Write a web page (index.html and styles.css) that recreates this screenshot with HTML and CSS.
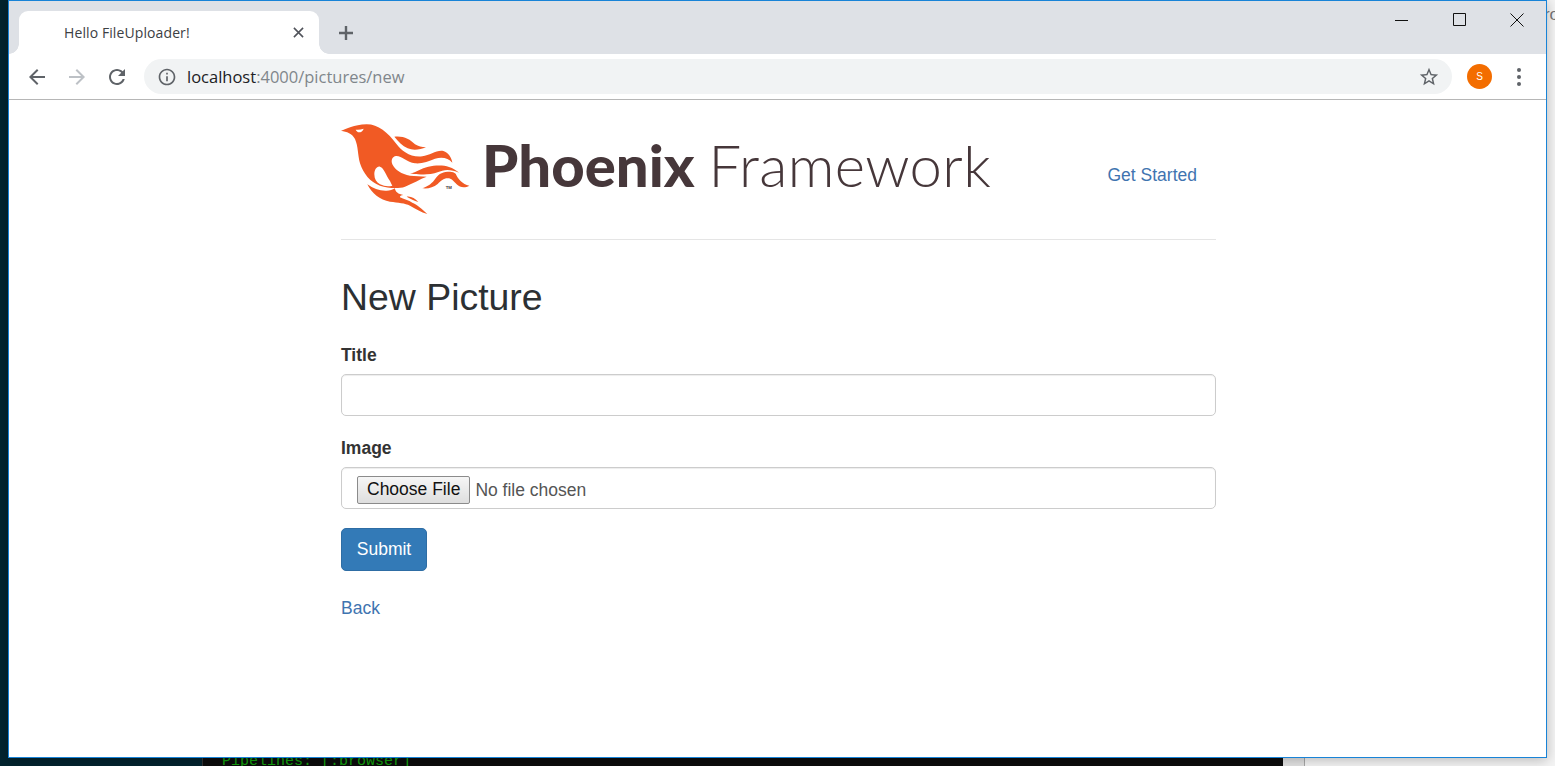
FILE: index.html
```html
<!DOCTYPE html>
<html lang="en">

<head>
    <meta charset="UTF-8">
    <meta name="viewport" content="width=device-width, initial-scale=1.0">
    <title>Hello FileUploader!</title>
    <link rel="stylesheet" href="styles.css">
</head>

<body>
    <!-- what shows behind the browser window -->
    <div class="desk-terminal"><span class="terminal-line">Pipelines: [:browser]</span></div>
    <div class="desk-side"><span class="desk-side-text">ro</span></div>

    <div class="window">
        <div class="titlebar">
            <div class="tab">
                <span class="tab-title">Hello FileUploader!</span>
                <svg class="tab-close" viewBox="0 0 12 12"><path d="M1 1l10 10M11 1L1 11"/></svg>
            </div>
            <svg class="new-tab" viewBox="0 0 16 16"><path d="M8 1v14M1 8h14"/></svg>
            <div class="win-controls">
                <svg class="win-btn" viewBox="0 0 14 14"><path d="M0 7.5h13"/></svg>
                <svg class="win-btn win-max" viewBox="0 0 14 14"><path d="M.5 .5h12v12H.5z"/></svg>
                <svg class="win-btn" viewBox="0 0 14 14"><path d="M.5 .5l13 13M13.5 .5l-13 13"/></svg>
            </div>
        </div>

        <div class="toolbar">
            <svg class="tool-icon" viewBox="0 0 24 24"><path d="M20 11H7.83l5.59-5.59L12 4l-8 8 8 8 1.41-1.41L7.83 13H20v-2z"/></svg>
            <svg class="tool-icon tool-off" viewBox="0 0 24 24"><path d="M4 11h12.17l-5.59-5.59L12 4l8 8-8 8-1.41-1.41L16.17 13H4v-2z"/></svg>
            <svg class="tool-icon" viewBox="0 0 24 24"><path d="M17.65 6.35C16.2 4.9 14.21 4 12 4c-4.42 0-7.99 3.58-7.99 8s3.57 8 7.99 8c3.73 0 6.84-2.55 7.73-6h-2.08c-.82 2.33-3.04 4-5.65 4-3.31 0-6-2.69-6-6s2.69-6 6-6c1.66 0 3.14.69 4.22 1.78L13 11h7V4l-2.35 2.35z"/></svg>
            <div class="omnibox">
                <svg class="info-icon" viewBox="0 0 24 24"><path d="M11 7h2v2h-2zm0 4h2v6h-2zm1-9C6.48 2 2 6.48 2 12s4.48 10 10 10 10-4.48 10-10S17.52 2 12 2zm0 18c-4.41 0-8-3.59-8-8s3.59-8 8-8 8 3.59 8 8-3.59 8-8 8z"/></svg>
                <span class="url"><span class="url-host">localhost</span>:4000/pictures/new</span>
                <svg class="star-icon" viewBox="0 0 24 24"><path d="M22 9.24l-7.19-.62L12 2 9.19 8.63 2 9.24l5.46 4.73L5.82 21 12 17.27 18.18 21l-1.63-7.03L22 9.24zM12 15.4l-3.76 2.27 1-4.28-3.32-2.88 4.38-.38L12 6.1l1.71 4.04 4.38.38-3.32 2.88 1 4.28L12 15.4z"/></svg>
            </div>
            <div class="avatar">S</div>
            <div class="menu-dots"><i></i><i></i><i></i></div>
        </div>

        <div class="page">
            <div class="container">
                <header class="header">
                    <div class="logo">
                        <svg class="logo-bird" viewBox="18 27 390 276">
                            <path d="M18 47C35 43 55 29 95 28C130 28 158 52 185 88C200 108 225 128 262 124C285 121 305 104 325 108C340 112 350 128 352 143C340 128 320 125 300 131C280 138 262 147 240 145C215 142 200 122 183 123C172 125 167 135 172 148C180 165 200 178 225 182C240 184 258 183 275 185C255 192 235 205 210 215C190 222 160 220 135 212C105 202 85 175 75 145C68 120 70 95 60 72C52 55 35 50 18 47Z"/>
                            <path class="logo-cut" d="M118 178C118 165 125 153 135 155C148 160 152 180 165 198C168 204 170 209 172 212C160 215 148 214 135 208C124 202 118 192 118 178Z"/>
                            <path class="logo-cut" d="M62 44C70 45 78 44 86 41C84 48 78 52 72 52C68 52 64 48 62 44Z"/>
                            <path d="M178 65C205 62 225 72 240 88C250 94 260 96 273 97C255 104 235 107 218 100C202 92 190 80 178 65Z"/>
                            <path d="M225 175C245 172 258 160 280 155C300 151 325 150 342 156C354 160 364 166 372 173C355 166 338 163 322 167C305 172 292 178 275 178C258 179 240 179 225 175Z"/>
                            <path d="M262 220C280 214 292 205 302 190C312 175 325 170 345 170C352 170 358 172 362 176C368 190 382 208 403 212C390 219 375 218 365 208C355 198 350 190 338 190C325 190 318 198 308 207C295 217 280 222 262 220Z"/>
                            <path d="M97 208C115 222 135 228 155 227C165 227 172 225 180 220C180 230 190 238 205 240C198 241 194 243 195 247C205 252 222 256 232 263C245 268 262 282 277 297C258 292 240 280 225 272C210 264 190 263 165 260C135 255 110 235 97 208Z"/>
                            <path d="M215 245C228 243 240 250 250 261C238 256 226 252 215 245Z"/>
                            <text class="logo-tm" x="332" y="221">TM</text>
                        </svg>
                        <span class="logo-bold">Phoenix</span>
                        <span class="logo-light">Framework</span>
                    </div>
                    <a class="nav-link" href="#">Get Started</a>
                </header>

                <h2 class="heading">New Picture</h2>

                <form>
                    <div class="form-group">
                        <label class="form-label">Title</label>
                        <input class="form-control" type="text">
                    </div>
                    <div class="form-group">
                        <label class="form-label">Image</label>
                        <input class="form-control file-control" type="file">
                    </div>
                    <button class="btn-submit" type="button">Submit</button>
                </form>

                <a class="back-link" href="#">Back</a>
            </div>
        </div>
    </div>
</body>

</html>
```

FILE: styles.css
```css
html, body {
    margin: 0;
    height: 100%;
}

body {
    position: relative;
    height: 766px;
    overflow: hidden;
    background: #03242f;
    font-family: "Liberation Sans", Arial, sans-serif;
}

.desk-terminal {
    position: absolute;
    left: 202px;
    top: 700px;
    width: 1081px;
    height: 66px;
    background: #0c0c0c;
    border-left: 1px solid #333;
    box-sizing: border-box;
    overflow: hidden;
}

.terminal-line {
    position: absolute;
    left: 19px;
    top: 53px;
    font-family: "Liberation Mono", monospace;
    font-size: 15px;
    line-height: 17px;
    color: #13a10e;
}

.desk-side {
    position: absolute;
    left: 1283px;
    top: 0;
    right: 0;
    height: 766px;
    background: #f4f4f4;
    border-left: 21px solid #e2e2e2;
    box-shadow: inset 1px 0 0 #a8a8a8;
    overflow: hidden;
}

.desk-side-text {
    position: absolute;
    right: -4px;
    top: 5px;
    font-size: 17px;
    color: #777;
}

.window {
    position: absolute;
    left: 8px;
    top: 0;
    width: 1539px;
    height: 758px;
    box-sizing: border-box;
    border: 1px solid #1883d7;
    background: #fff;
    box-shadow: 0 2px 12px rgba(0, 0, 0, 0.25);
    display: flex;
    flex-direction: column;
}

.titlebar {
    height: 53px;
    flex: none;
    background: #dee1e6;
    display: flex;
    align-items: flex-start;
    box-sizing: border-box;
    padding-left: 10px;
}

.tab {
    position: relative;
    width: 300px;
    height: 43px;
    margin-top: 10px;
    background: #fff;
    border-radius: 9px 9px 0 0;
    display: flex;
    align-items: center;
    flex: none;
}

.tab::before,
.tab::after {
    content: "";
    position: absolute;
    bottom: 0;
    width: 10px;
    height: 10px;
}

.tab::before {
    left: -10px;
    background: radial-gradient(circle at 0 0, #dee1e6 9.5px, #fff 10px);
}

.tab::after {
    right: -10px;
    background: radial-gradient(circle at 100% 0, #dee1e6 9.5px, #fff 10px);
}

.tab-title {
    margin-left: 45px;
    font-family: "Open Sans", sans-serif;
    font-size: 14px;
    letter-spacing: 0.1px;
    color: #3c4043;
}

.tab-close {
    width: 11px;
    height: 11px;
    margin-left: auto;
    margin-right: 15px;
    fill: none;
    stroke: #50535a;
    stroke-width: 1.7;
}

.new-tab {
    width: 16px;
    height: 16px;
    margin: 24px 0 0 19px;
    fill: none;
    stroke: #5f6368;
    stroke-width: 2.4;
}

.win-controls {
    margin-left: auto;
    display: flex;
    gap: 43px;
    padding: 12px 22px 0 0;
}

.win-btn {
    width: 14px;
    height: 14px;
    fill: none;
    stroke: #111;
    stroke-width: 1;
}

.win-max {
    margin-left: 1px;
}

.toolbar {
    height: 46px;
    flex: none;
    box-sizing: border-box;
    border-bottom: 1px solid #b6b6b6;
    background: #fff;
    display: flex;
    align-items: center;
    padding-left: 16px;
}

.tool-icon {
    width: 24px;
    height: 24px;
    margin-right: 16px;
    fill: #5f6368;
}

.tool-off {
    fill: #bdc1c6;
}

.omnibox {
    width: 1308px;
    height: 35px;
    margin-left: -1px;
    border-radius: 18px;
    background: #f1f3f4;
    display: flex;
    align-items: center;
    flex: none;
}

.info-icon {
    width: 20px;
    height: 20px;
    margin-left: 13px;
    fill: #5f6368;
}

.url {
    margin-left: 10px;
    font-family: "Open Sans", sans-serif;
    font-size: 16.5px;
    color: #80868b;
}

.url-host {
    color: #202124;
}

.star-icon {
    width: 22px;
    height: 22px;
    margin-left: auto;
    margin-right: 12px;
    fill: #5f6368;
}

.avatar {
    width: 25px;
    height: 25px;
    margin-left: 15px;
    flex: none;
    border-radius: 50%;
    background: #f36d00;
    color: #fff;
    font-size: 10px;
    line-height: 25px;
    text-align: center;
}

.menu-dots {
    margin-left: 25px;
    display: flex;
    flex-direction: column;
    gap: 3px;
}

.menu-dots i {
    width: 4px;
    height: 4px;
    border-radius: 50%;
    background: #5f6368;
}

.page {
    flex: 1;
    background: #fff;
    color: #333;
    font-size: 17.5px;
    line-height: 1.42857;
}

.container {
    width: 875px;
    margin-left: 332px;
}

.header {
    height: 140px;
    box-sizing: border-box;
    border-bottom: 1px solid #e5e5e5;
    display: flex;
    align-items: flex-start;
}

.logo {
    display: flex;
    align-items: center;
    height: 92px;
    margin-top: 24px;
    color: #46373a;
    font-family: Lato, sans-serif;
    font-size: 58px;
    line-height: 82px;
}

.logo-bird {
    width: 130px;
    height: 92px;
    fill: #f15a24;
    flex: none;
}

.logo-cut {
    fill: #fff;
}

.logo-tm {
    font-family: "Liberation Sans", Arial, sans-serif;
    font-size: 13px;
    font-weight: 700;
    fill: #46373a;
}

.logo-bold {
    margin-left: 11px;
    padding-bottom: 10px;
    font-weight: 900;
}

.logo-light {
    margin-left: 14px;
    padding-bottom: 10px;
    font-weight: 300;
    letter-spacing: 0.35px;
}

.nav-link {
    margin-left: auto;
    margin-right: 19px;
    margin-top: 63px;
    color: #3f74b0;
    text-decoration: none;
}

.heading {
    margin: 36px 0 25px;
    font-size: 37.4px;
    font-weight: 400;
    line-height: 42px;
    color: #2c3033;
}

.form-group {
    margin-bottom: 19px;
}

.form-group:first-child {
    margin-bottom: 20px;
}

.form-label {
    display: block;
    margin-bottom: 6px;
    font-weight: 700;
}

.form-control {
    display: block;
    width: 100%;
    height: 42px;
    box-sizing: border-box;
    border: 1px solid #ccc;
    border-radius: 5px;
    background: #fff;
    font-family: "Liberation Sans", Arial, sans-serif;
    font-size: 17.5px;
    color: #555;
    box-shadow: inset 0 1px 1px rgba(0, 0, 0, 0.075);
}

.file-control {
    padding: 8px 15px 6px;
}

.file-control::file-selector-button {
    height: 28px;
    margin-right: 5px;
    padding: 0 9px;
    border: 1px solid #8b8b8b;
    border-radius: 2px;
    background: linear-gradient(#f6f6f6, #dedede);
    font-family: "Liberation Sans", Arial, sans-serif;
    font-size: 17.5px;
    color: #111;
}

.btn-submit {
    display: block;
    width: 86px;
    height: 43px;
    padding: 0;
    border: 1px solid #2e6da4;
    border-radius: 5px;
    background: #337ab7;
    color: #fff;
    font-family: "Liberation Sans", Arial, sans-serif;
    font-size: 17.5px;
}

.back-link {
    display: inline-block;
    margin-top: 25px;
    color: #3f74b0;
    text-decoration: none;
}
```
